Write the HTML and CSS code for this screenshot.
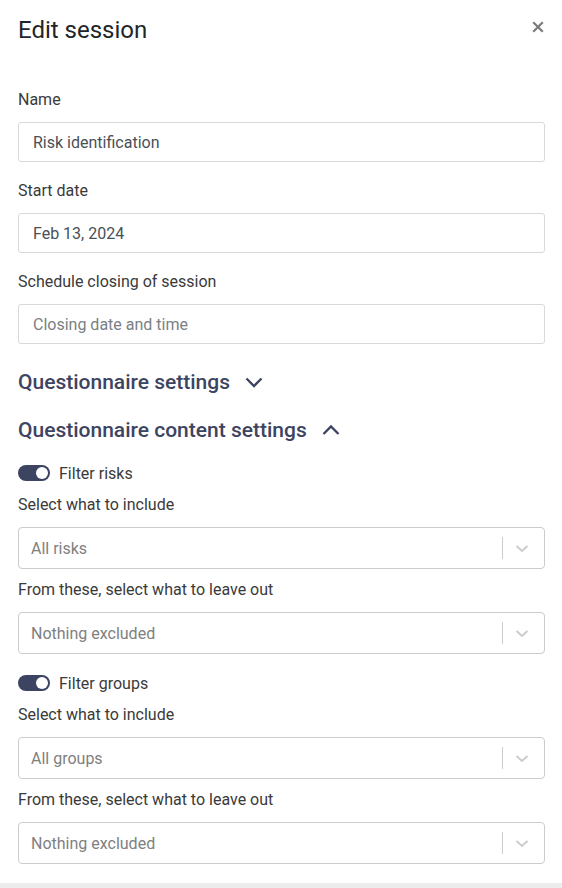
FILE: index.html
```html
<!DOCTYPE html>
<html lang="en">
<head>
<meta charset="utf-8">
<title>Edit session</title>
<link rel="stylesheet" href="styles.css">
</head>
<body>
<div class="panel">
  <div class="header">
    <h1 class="title">Edit session</h1>
    <button class="close" aria-label="Close">
      <svg width="12" height="12" viewBox="0 0 12 12"><path d="M2 2L10 10M10 2L2 10" stroke="#7a7a7a" stroke-width="2.2" stroke-linecap="square"/></svg>
    </button>
  </div>

  <div class="fields">
    <div class="field">
      <label class="label">Name</label>
      <div class="input">Risk identification</div>
    </div>
    <div class="field">
      <label class="label">Start date</label>
      <div class="input">Feb 13, 2024</div>
    </div>
    <div class="field">
      <label class="label">Schedule closing of session</label>
      <div class="input placeholder">Closing date and time</div>
    </div>
  </div>

  <div class="section">
    <span>Questionnaire settings</span>
    <svg class="chev" width="20" height="12" viewBox="0 0 20 12"><path d="M2.5 2.5L10 10L17.5 2.5" fill="none" stroke="#3d4461" stroke-width="2.3"/></svg>
  </div>
  <div class="section second">
    <span>Questionnaire content settings</span>
    <svg class="chev" width="20" height="12" viewBox="0 0 20 12"><path d="M2.5 10L10 2.5L17.5 10" fill="none" stroke="#3d4461" stroke-width="2.3"/></svg>
  </div>

  <div class="toggle-row">
    <span class="toggle"><span class="knob"></span></span>
    <span class="toggle-label">Filter risks</span>
  </div>
  <div class="sfield">
    <label class="label">Select what to include</label>
    <div class="select"><span class="sval">All risks</span><span class="sep"></span><svg class="schev" width="20" height="20" viewBox="0 0 20 20"><path d="M4.5 8L10 13L15.5 8" fill="none" stroke="#cccccc" stroke-width="2"/></svg></div>
  </div>
  <div class="sfield">
    <label class="label">From these, select what to leave out</label>
    <div class="select"><span class="sval">Nothing excluded</span><span class="sep"></span><svg class="schev" width="20" height="20" viewBox="0 0 20 20"><path d="M4.5 8L10 13L15.5 8" fill="none" stroke="#cccccc" stroke-width="2"/></svg></div>
  </div>

  <div class="toggle-row">
    <span class="toggle"><span class="knob"></span></span>
    <span class="toggle-label">Filter groups</span>
  </div>
  <div class="sfield">
    <label class="label">Select what to include</label>
    <div class="select"><span class="sval">All groups</span><span class="sep"></span><svg class="schev" width="20" height="20" viewBox="0 0 20 20"><path d="M4.5 8L10 13L15.5 8" fill="none" stroke="#cccccc" stroke-width="2"/></svg></div>
  </div>
  <div class="sfield">
    <label class="label">From these, select what to leave out</label>
    <div class="select"><span class="sval">Nothing excluded</span><span class="sep"></span><svg class="schev" width="20" height="20" viewBox="0 0 20 20"><path d="M4.5 8L10 13L15.5 8" fill="none" stroke="#cccccc" stroke-width="2"/></svg></div>
  </div>
</div>
</body>
</html>
```

FILE: styles.css
```css
html, body {
  margin: 0;
  padding: 0;
}
body {
  background: #ececec;
  font-family: Roboto, "Liberation Sans", sans-serif;
  color: #333333;
}
.panel {
  background: #ffffff;
  width: 562px;
  height: 883px;
  box-sizing: border-box;
  padding: 0 17px 0 18px;
  box-shadow: 0 1px 3px rgba(0,0,0,0.08);
}
.header {
  display: flex;
  align-items: center;
  justify-content: space-between;
  height: 60px;
}
.title {
  margin: 0;
  font-size: 24px;
  font-weight: 400;
  color: #212529;
  line-height: 30px;
}
.close {
  border: 0;
  background: none;
  padding: 0;
  margin-right: 0;
  width: 14px;
  height: 14px;
  display: flex;
  align-items: center;
  justify-content: center;
  margin-top: -6px;
}
.fields {
  padding-top: 29px;
}
.field {
  margin-bottom: 18px;
}
.label {
  display: block;
  font-size: 16px;
  line-height: 22px;
  color: #3a3a3a;
  margin-bottom: 11px;
}
.input {
  height: 40px;
  box-sizing: border-box;
  border: 1px solid #d7dadd;
  border-radius: 3px;
  padding: 0 14px;
  display: flex;
  align-items: center;
  font-size: 16px;
  color: #495057;
}
.input.placeholder {
  color: #7a7f84;
}
.section {
  display: flex;
  align-items: center;
  gap: 14px;
  font-size: 21px;
  font-weight: 500;
  color: #3d4461;
  line-height: 28px;
  margin-top: 24px;
}
.section.second {
  margin-top: 20px;
}
.chev {
  display: block;
}
.toggle-row {
  display: flex;
  align-items: center;
  gap: 9px;
  margin-top: 18px;
  height: 22px;
}
.toggle {
  width: 32px;
  height: 16px;
  border-radius: 8px;
  background: #3d4461;
  display: flex;
  align-items: center;
  justify-content: flex-end;
  padding: 0 2px;
  box-sizing: border-box;
}
.knob {
  width: 12px;
  height: 12px;
  border-radius: 50%;
  background: #ffffff;
}
.toggle-label {
  font-size: 16px;
  color: #3a3a3a;
}
.sfield {
  margin-top: 10px;
}
.select {
  height: 42px;
  box-sizing: border-box;
  border: 1px solid #cccccc;
  border-radius: 4px;
  display: flex;
  align-items: center;
  padding-left: 12px;
}
.sval {
  flex: 1;
  font-size: 16px;
  color: #808080;
}
.sep {
  width: 1px;
  height: 22px;
  background: #cccccc;
}
.schev {
  display: block;
  margin: 0 12px 0 9px;
}
```
